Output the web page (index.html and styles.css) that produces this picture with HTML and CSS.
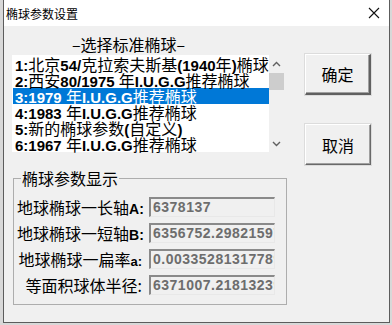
FILE: index.html
```html
<!DOCTYPE html>
<html lang="zh">
<head>
    <meta charset="UTF-8">
    <title>椭球参数设置</title>
    <link rel="stylesheet" href="styles.css">
</head>
<body>
    <div class="window">
        <div class="titlebar">
            <span class="title">椭球参数设置</span>
            <svg class="close" width="12" height="12" viewBox="0 0 12 12">
                <path d="M1 1 L11 11 M11 1 L1 11" stroke="#111" stroke-width="1.1" fill="none"/>
            </svg>
        </div>
        <div class="client">
            <div class="left-col">
                <div class="heading">–选择标准椭球–</div>
                <div class="listbox">
                    <div class="items">
                        <div class="item"><b>1:</b>北京<b>54/</b>克拉索夫斯基<b>(1940</b>年<b>)</b>椭球</div>
                        <div class="item"><b>2:</b>西安<b>80/1975 </b>年<b>I.U.G.G</b>推荐椭球</div>
                        <div class="item selected"><b>3:1979 </b>年<b>I.U.G.G</b>推荐椭球</div>
                        <div class="item"><b>4:1983 </b>年<b>I.U.G.G</b>推荐椭球</div>
                        <div class="item"><b>5:</b>新的椭球参数<b>(</b>自定义<b>)</b></div>
                        <div class="item"><b>6:1967 </b>年<b>I.U.G.G</b>推荐椭球</div>
                    </div>
                    <div class="scrollbar">
                        <svg class="arrow" width="9" height="6" viewBox="0 0 9 6"><path d="M1 5 L4.5 1.5 L8 5" stroke="#606060" stroke-width="1.4" fill="none"/></svg>
                        <div class="thumb"></div>
                        <div class="track"></div>
                        <svg class="arrow" width="9" height="6" viewBox="0 0 9 6"><path d="M1 1 L4.5 4.5 L8 1" stroke="#606060" stroke-width="1.4" fill="none"/></svg>
                    </div>
                </div>
                <fieldset class="group">
                    <legend>椭球参数显示</legend>
                    <div class="row">
                        <span class="label">地球椭球一长轴<b>A:</b></span>
                        <div class="field">6378137</div>
                    </div>
                    <div class="row">
                        <span class="label">地球椭球一短轴<b>B:</b></span>
                        <div class="field">6356752.29821597</div>
                    </div>
                    <div class="row">
                        <span class="label">地球椭球一扁率<b class="small">a:</b></span>
                        <div class="field">0.00335281317789</div>
                    </div>
                    <div class="row">
                        <span class="label">等面积球体半径:</span>
                        <div class="field">6371007.21813239</div>
                    </div>
                </fieldset>
            </div>
            <div class="right-col">
                <button class="btn default">确定</button>
                <button class="btn">取消</button>
            </div>
        </div>
    </div>
</body>
</html>
```

FILE: styles.css
```css
body, html {
    margin: 0;
    padding: 0;
}
body {
    width: 392px;
    height: 325px;
    overflow: hidden;
    background-color: #d8d8d8;
    font-family: "Liberation Sans", "Noto Sans CJK SC", sans-serif;
    color: #000;
}
.window {
    margin-left: 3px;
    width: 385px;
    height: 322px;
    border: 1px solid #5c5c5c;
    border-top: none;
    background-color: #f0f0f0;
}
.titlebar {
    height: 26px;
    display: flex;
    align-items: center;
    justify-content: space-between;
    background-color: #fff;
    padding: 0 9px 0 2px;
}
.title {
    font-size: 12px;
    font-family: "Noto Sans CJK SC", sans-serif;
}
.client {
    display: flex;
    padding: 8px 0 0 8px;
}
.left-col {
    width: 271px;
}
.heading {
    font-family: "Noto Sans CJK SC", sans-serif;
    font-size: 16px;
    line-height: 20px;
    padding-left: 60px;
    margin-bottom: 1px;
}
.listbox {
    display: flex;
    height: 97px;
    background-color: #fff;
}
.items {
    flex: 1;
    padding-top: 1px;
    padding-left: 1px;
}
.item {
    height: 16px;
    line-height: 16px;
    font-size: 16px;
    padding-left: 2px;
    white-space: nowrap;
    font-family: "Noto Sans CJK SC", sans-serif;
}
.item b {
    font-family: "Liberation Sans", sans-serif;
    font-size: 15px;
}
.item.selected {
    background-color: #0078d7;
    color: #fff;
}
.scrollbar {
    width: 17px;
    display: flex;
    flex-direction: column;
    align-items: center;
    background-color: #f0f0f0;
}
.arrow {
    margin: 6px 0;
}
.scrollbar .arrow:last-child {
    margin: 6px 0 5px;
}
.thumb {
    width: 15px;
    height: 17px;
    background-color: #cdcdcd;
}
.track {
    flex: 1;
}
.group {
    margin: 16px 0 0 1px;
    width: 262px;
    padding: 8px 7px 9px 3px;
    border: 1px solid #adadad;
}
.group legend {
    margin-left: 4px;
    padding: 0 1px;
    font-size: 16px;
    line-height: 20px;
    font-family: "Noto Sans CJK SC", sans-serif;
}
.row {
    display: flex;
    align-items: center;
    height: 21px;
    margin-bottom: 5px;
}
.row:last-child {
    margin-bottom: 0;
}
.label {
    width: 125px;
    margin-right: 7px;
    text-align: right;
    font-size: 16px;
    white-space: nowrap;
    font-family: "Noto Sans CJK SC", sans-serif;
}
.label b {
    font-family: "Liberation Sans", sans-serif;
    font-size: 14px;
}
.label b.small {
    font-size: 13px;
}
.field {
    width: 121px;
    height: 17px;
    line-height: 17px;
    padding-left: 2px;
    border-top: 2px solid #8a8a8a;
    border-left: 2px solid #8a8a8a;
    border-right: 1px solid #e8e8e8;
    border-bottom: 1px solid #e8e8e8;
    background-color: #f0f0f0;
    color: #6d6d6d;
    font-weight: bold;
    font-size: 14px;
    letter-spacing: 0.5px;
    white-space: nowrap;
    overflow: hidden;
}
.right-col {
    display: flex;
    flex-direction: column;
    margin-left: 22px;
    padding-top: 20px;
}
.btn {
    width: 66px;
    height: 41px;
    margin-bottom: 29px;
    font-size: 16px;
    font-family: "Noto Sans CJK SC", sans-serif;
    background-color: #f0f0f0;
    border-top: 1px solid #fff;
    border-left: 1px solid #fff;
    border-right: 1px solid #696969;
    border-bottom: 1px solid #696969;
    box-shadow: inset -1px -1px 0 #a0a0a0, 0 0 0 1px #dcdcdc;
    padding: 0;
}
.btn.default {
    border-right: 2px solid #606060;
    border-bottom: 2px solid #606060;
}
```
